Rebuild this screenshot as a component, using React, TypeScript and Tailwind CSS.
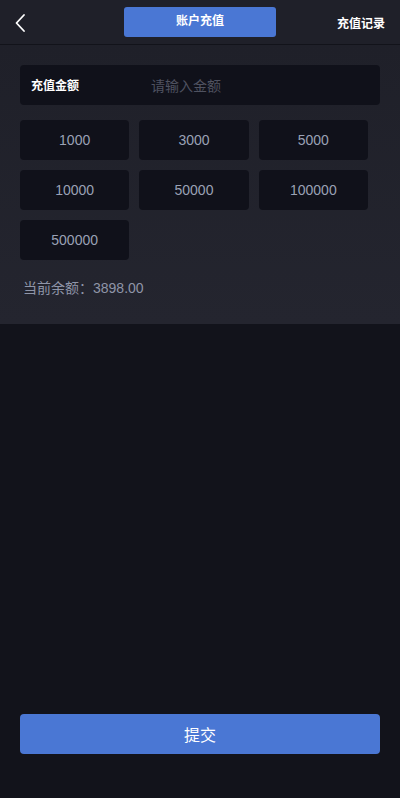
const amounts = ['1000', '3000', '5000', '10000', '50000', '100000', '500000'];

export default function App() {
  return (
    <div
      className="flex min-h-[798px] flex-col bg-[#12131b] text-white"
      style={{ fontFamily: '"Noto Sans CJK SC", "Liberation Sans", sans-serif' }}
    >
      <header className="relative flex h-[45px] items-center justify-center border-b border-[#12131a] bg-[#1f2029]">
        <button className="absolute left-[12px] top-[12px] flex h-[22px] w-[16px] items-center justify-center">
          <svg width="12" height="20" viewBox="0 0 12 20" fill="none">
            <path d="M10 2 L2.5 10 L10 18" stroke="#ffffff" strokeWidth="1.8" strokeLinecap="round" strokeLinejoin="round" />
          </svg>
        </button>
        <div className="mb-[1px] flex h-[30px] w-[152px] items-center justify-center rounded-[3px] bg-[#4a77d4] pb-[4px] text-[12px] font-bold">
          账户充值
        </div>
        <span className="absolute right-[15px] top-[14px] text-[12px] font-bold leading-[18px]">充值记录</span>
      </header>

      <section className="bg-gradient-to-b from-[#1f2029] to-[#24252f] px-[20px] pb-[26px] pt-[20px]">
        <div className="flex h-[40px] items-center rounded-[4px] bg-[#10111a]">
          <span className="w-[131px] pl-[11px] text-[12px] font-bold">充值金额</span>
          <span className="text-[14px] text-[#4f5260]">请输入金额</span>
        </div>

        <div className="mt-[15px] grid w-[348px] grid-cols-3 gap-[10px]">
          {amounts.map((a) => (
            <div
              key={a}
              className="flex h-[40px] items-center justify-center rounded-[4px] bg-[#10111a] text-[14px] text-[#9aa1b5]"
              style={{ fontFamily: '"Liberation Sans", sans-serif' }}
            >
              {a}
            </div>
          ))}
        </div>

        <p className="mt-[17px] pl-[3px] text-[14px] leading-[20px] text-[#8f95a8]">
          当前余额：<span style={{ fontFamily: '"Liberation Sans", sans-serif' }}>3898.00</span>
        </p>
      </section>

      <div className="flex-1" />

      <div className="px-[20px] pb-[44px]">
        <button className="flex h-[40px] w-full items-center justify-center rounded-[4px] bg-[#4a77d4] text-[16px]">
          提交
        </button>
      </div>
    </div>
  );
}
